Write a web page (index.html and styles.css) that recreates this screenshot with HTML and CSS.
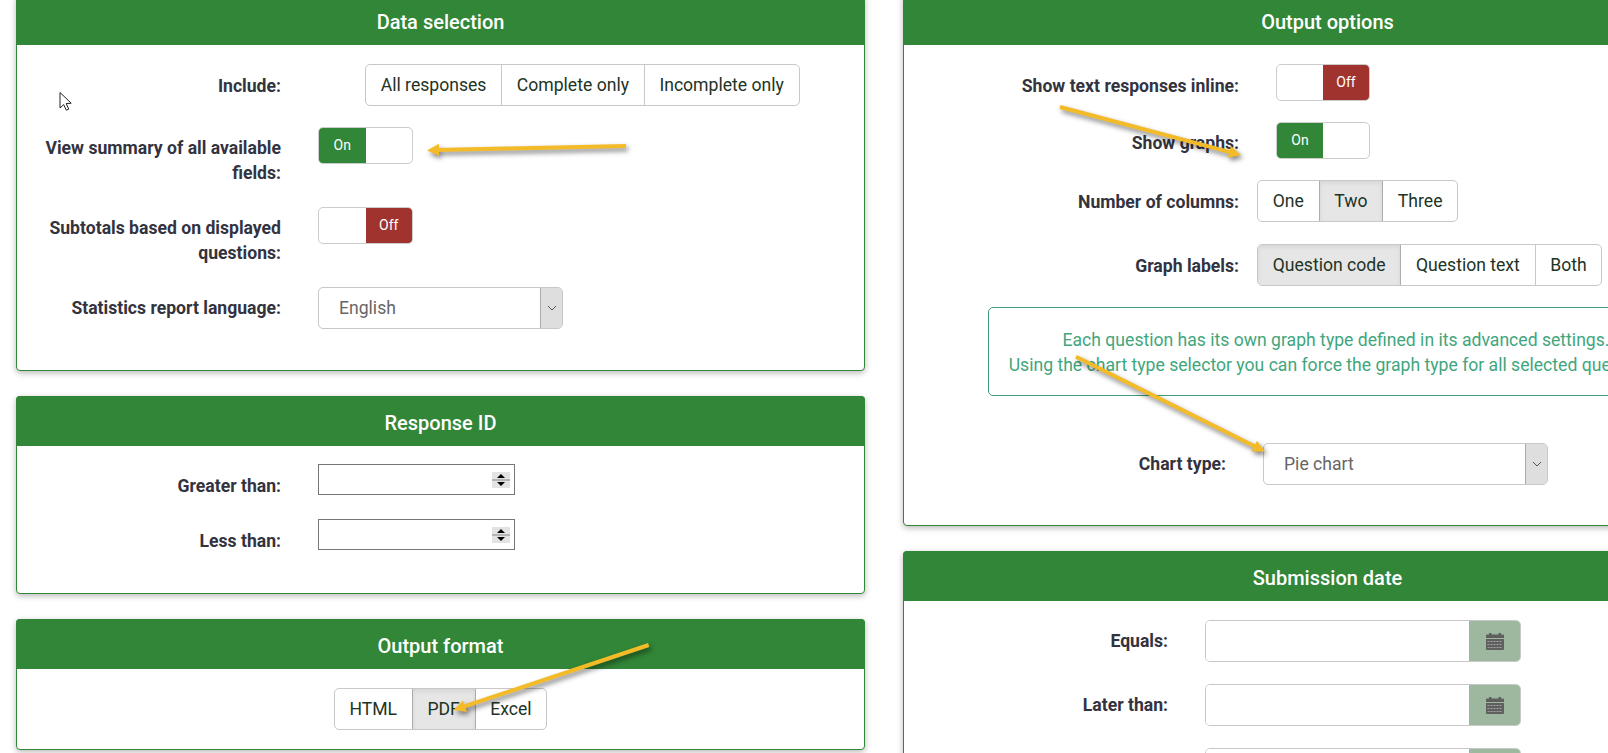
FILE: index.html
```html
<!DOCTYPE html>
<html lang="en">
<head>
<meta charset="utf-8">
<title>Statistics settings</title>
<link rel="stylesheet" href="styles.css">
</head>
<body>
<div class="page">
  <div class="column">
    <section class="panel panel-data">
      <h2 class="panel-title">Data selection</h2>
      <div class="panel-body">
        <div class="row row-left">
          <label class="row-label label-top">Include:</label>
          <div class="btn-group group-include">
            <span class="btn">All responses</span><span class="btn">Complete only</span><span class="btn">Incomplete only</span>
          </div>
        </div>
        <div class="row row-left">
          <label class="row-label label-toggle">View summary of all available fields:</label>
          <div class="toggle"><span class="toggle-on">On</span><span class="toggle-blank"></span></div>
        </div>
        <div class="row row-left">
          <label class="row-label label-toggle">Subtotals based on displayed questions:</label>
          <div class="toggle"><span class="toggle-blank"></span><span class="toggle-off">Off</span></div>
        </div>
        <div class="row row-left">
          <label class="row-label">Statistics report language:</label>
          <div class="select select-language">
            <span class="select-value">English</span>
            <span class="select-arrow"><svg width="10" height="6" viewBox="0 0 10 6"><path d="M1 1l4 4 4-4" fill="none" stroke="#555" stroke-width="1"/></svg></span>
          </div>
        </div>
      </div>
    </section>

    <section class="panel panel-response">
      <h2 class="panel-title">Response ID</h2>
      <div class="panel-body">
        <div class="row row-left row-number">
          <label class="row-label label-number">Greater than:</label>
          <div class="number">
            <span class="spinner">
              <svg width="18" height="16" viewBox="0 0 18 16"><rect width="18" height="16" fill="#e3e3e3"/><rect y="7" width="18" height="2" fill="#b4b4b4"/><path d="M9 2l4 4H5zM9 14l-4-4h8z" fill="#000"/></svg>
            </span>
          </div>
        </div>
        <div class="row row-left row-number">
          <label class="row-label label-number">Less than:</label>
          <div class="number">
            <span class="spinner">
              <svg width="18" height="16" viewBox="0 0 18 16"><rect width="18" height="16" fill="#e3e3e3"/><rect y="7" width="18" height="2" fill="#b4b4b4"/><path d="M9 2l4 4H5zM9 14l-4-4h8z" fill="#000"/></svg>
            </span>
          </div>
        </div>
      </div>
    </section>

    <section class="panel panel-format">
      <h2 class="panel-title">Output format</h2>
      <div class="panel-body body-center">
        <div class="btn-group">
          <span class="btn">HTML</span><span class="btn active">PDF</span><span class="btn">Excel</span>
        </div>
      </div>
    </section>
  </div>

  <div class="column">
    <section class="panel panel-options">
      <h2 class="panel-title">Output options</h2>
      <div class="panel-body">
        <div class="row row-right">
          <label class="row-label label-top">Show text responses inline:</label>
          <div class="toggle"><span class="toggle-blank"></span><span class="toggle-off">Off</span></div>
        </div>
        <div class="row row-right">
          <label class="row-label">Show graphs:</label>
          <div class="toggle"><span class="toggle-on">On</span><span class="toggle-blank"></span></div>
        </div>
        <div class="row row-right row-group">
          <label class="row-label label-top">Number of columns:</label>
          <div class="btn-group">
            <span class="btn">One</span><span class="btn active">Two</span><span class="btn">Three</span>
          </div>
        </div>
        <div class="row row-right row-group row-before-info">
          <label class="row-label label-top">Graph labels:</label>
          <div class="btn-group">
            <span class="btn active">Question code</span><span class="btn">Question text</span><span class="btn">Both</span>
          </div>
        </div>
        <div class="info">
          <p class="info-line">Each question has its own graph type defined in its advanced settings.</p>
          <p class="info-line">Using the chart type selector you can force the graph type for all selected questions.</p>
        </div>
        <div class="row row-chart">
          <label class="row-label">Chart type:</label>
          <div class="select select-chart">
            <span class="select-value">Pie chart</span>
            <span class="select-arrow"><svg width="10" height="6" viewBox="0 0 10 6"><path d="M1 1l4 4 4-4" fill="none" stroke="#555" stroke-width="1"/></svg></span>
          </div>
        </div>
      </div>
    </section>

    <section class="panel panel-date">
      <h2 class="panel-title">Submission date</h2>
      <div class="panel-body">
        <div class="row row-date">
          <label class="row-label">Equals:</label>
          <div class="date-input">
            <span class="date-field"></span>
            <span class="date-addon"><svg width="18" height="18" viewBox="0 0 18 18"><use href="#calendar"/></svg></span>
          </div>
        </div>
        <div class="row row-date">
          <label class="row-label">Later than:</label>
          <div class="date-input">
            <span class="date-field"></span>
            <span class="date-addon"><svg width="18" height="18" viewBox="0 0 18 18"><use href="#calendar"/></svg></span>
          </div>
        </div>
        <div class="row row-date">
          <span class="row-label"></span>
          <div class="date-input">
            <span class="date-field"></span>
            <span class="date-addon"></span>
          </div>
        </div>
      </div>
    </section>
  </div>

  <svg class="sprite" width="0" height="0">
    <symbol id="calendar" viewBox="0 0 18 18">
      <path d="M0 3.5a1 1 0 0 1 1-1h2V1h2.500v1.500h7V1H15v1.500h2a1 1 0 0 1 1 1V6H0z" fill="#5f5f5f"/>
      <path d="M0 7h18v10a1 1 0 0 1-1 1H1a1 1 0 0 1-1-1z" fill="#5f5f5f"/>
      <path d="M1.500 9.500h15M1.500 12.500h15M1.500 15.500h15" stroke="#a3a3a3" stroke-width="1" stroke-dasharray="2 1"/>
    </symbol>
  </svg>

  <svg class="overlay" width="1608" height="753" viewBox="0 0 1608 753">
    <g class="arrow">
      <path d="M626 146L436 150" class="arrow-line"/>
      <polygon points="427,150.500 439.100,155.700 438.900,143.700" class="arrow-head"/>
    </g>
    <g class="arrow">
      <path d="M1060 107L1232 152.600" class="arrow-line"/>
      <polygon points="1241,155 1227.900,157.700 1230.900,146.100" class="arrow-head"/>
    </g>
    <g class="arrow">
      <path d="M1076 356.700L1257 447.500" class="arrow-line"/>
      <polygon points="1265,451.500 1251.600,451.500 1257,440.700" class="arrow-head"/>
    </g>
    <g class="arrow">
      <path d="M648.700 645L462 707.200" class="arrow-line"/>
      <polygon points="453.500,710 466.900,711.900 463.100,700.500" class="arrow-head"/>
    </g>
    <path class="cursor" d="M60 92.500V108l3.700-3.400 2.600 5.600 2.500-1.100-2.600-5.500 5-.4z"/>
  </svg>
</div>
</body>
</html>
```

FILE: styles.css
```css
* {
  box-sizing: border-box;
}

html,
body {
  margin: 0;
  padding: 0;
  height: 100%;
  overflow: hidden;
  background: #fff;
}

body {
  font-family: Roboto, "Liberation Sans", sans-serif;
  font-size: 17.6px;
  line-height: 25px;
  color: #333;
}

.page {
  position: relative;
  display: flex;
  gap: 38px;
  width: 1608px;
  height: 753px;
  padding-left: 16px;
  overflow: hidden;
}

.column {
  flex: 0 0 849px;
  margin-top: -5px;
}

.panel {
  border: 1px solid #328637;
  border-radius: 4px;
  background: #fff;
  box-shadow: 0 2px 6px rgba(0, 0, 0, 0.28);
  margin-bottom: 25px;
}

.panel-title {
  margin: -1px -1px 0;
  height: 50px;
  padding-top: 2px;
  background: #328637;
  color: #fff;
  font-size: 20px;
  font-weight: 500;
  line-height: 50px;
  text-align: center;
  border-radius: 4px 4px 0 0;
}

.panel-body {
  padding-top: 19px;
}

.panel-data {
  height: 376px;
}

.panel-response {
  height: 198px;
}

.panel-response .panel-body {
  padding-top: 18px;
}

.panel-format {
  height: 131px;
}

.panel-options {
  height: 531px;
}

.body-center {
  display: flex;
  justify-content: center;
}

.row {
  display: flex;
  align-items: flex-start;
  margin-bottom: 21px;
}

.row-label {
  flex: none;
  padding-top: 9px;
  font-weight: 700;
  text-align: right;
  color: #333340;
}

.label-top,
.label-number {
  padding-top: 10px;
}

.row-left {
  gap: 37px;
}

.row-left .row-label {
  width: 264px;
}

.row-left .toggle {
  width: 95px;
}

.group-include {
  margin-left: 47px;
}

.row-number {
  margin-bottom: 20px;
}

.row-right {
  gap: 37px;
}

.row-right .row-label {
  width: 335px;
}

.row-group {
  gap: 18px;
  margin-bottom: 22px;
}

.row-before-info {
  margin-bottom: 21px;
}

.row-chart {
  gap: 37px;
}

.row-chart .row-label {
  width: 322px;
}

.row-date {
  gap: 37px;
  margin-bottom: 22px;
}

.row-date .row-label {
  width: 264px;
}

.btn-group {
  display: inline-flex;
  height: 42px;
  border: 1px solid #c8c8c8;
  border-radius: 5px;
  overflow: hidden;
  background: #fff;
  color: #1d3324;
}

.btn {
  padding: 0 14.7px;
  line-height: 40px;
  white-space: nowrap;
  border-left: 1px solid #c8c8c8;
}

.btn:first-child {
  border-left: 0;
}

.btn.active {
  background: #e6e6e6;
  box-shadow: inset 0 2px 4px rgba(0, 0, 0, 0.08);
  border-left-color: #adadad;
  border-right: 1px solid #adadad;
  margin-right: -1px;
}

.btn.active + .btn {
  border-left-color: transparent;
}

.toggle {
  display: flex;
  width: 94px;
  height: 37px;
  border: 1px solid #ccc;
  border-radius: 5px;
  overflow: hidden;
  background: #fff;
  font-size: 14px;
  line-height: 35px;
  text-align: center;
  color: #fff;
}

.toggle-on,
.toggle-off,
.toggle-blank {
  flex: 1;
}

.toggle-on {
  background: #328637;
}

.toggle-off {
  background: #a1332f;
}

.select {
  display: flex;
  justify-content: space-between;
  height: 42px;
  border: 1px solid #c8c8c8;
  border-radius: 5px;
  overflow: hidden;
  background: #fff;
  color: #666;
  line-height: 40px;
}

.select-language {
  width: 245px;
}

.select-chart {
  width: 285px;
}

.select-value {
  padding-left: 20px;
}

.select-arrow {
  display: flex;
  flex: 0 0 22px;
  align-items: center;
  justify-content: center;
  background: #dedede;
  border-left: 1px solid #aaa;
}

.number {
  display: flex;
  align-items: center;
  justify-content: flex-end;
  width: 197px;
  height: 31px;
  padding-right: 4px;
  border: 1px solid #767676;
  background: #fff;
}

.spinner {
  display: flex;
}

.info {
  width: 696px;
  height: 89px;
  margin: 0 0 47px 84px;
  padding-top: 20px;
  border: 1px solid #3f9d77;
  border-radius: 5px;
  color: #3fa67d;
  text-align: center;
}

.info-line {
  margin: 0;
  white-space: nowrap;
}

.date-input {
  display: flex;
  width: 316px;
  height: 42px;
  border: 1px solid #c8c8c8;
  border-radius: 5px;
  overflow: hidden;
}

.date-field {
  flex: 1;
  background: #fff;
}

.date-addon {
  display: flex;
  flex: 0 0 51px;
  align-items: center;
  justify-content: center;
  background: #9db89e;
}

.sprite {
  position: absolute;
}

.overlay {
  position: absolute;
  top: 0;
  left: 0;
  pointer-events: none;
}

.arrow {
  filter: drop-shadow(2px 3px 2.5px rgba(0, 0, 0, 0.5));
}

.arrow-line {
  fill: none;
  stroke: #f3bb27;
  stroke-width: 4;
}

.arrow-head {
  fill: #f3bb27;
}

.cursor {
  fill: #fff;
  stroke: #222;
  stroke-width: 1;
}
```
